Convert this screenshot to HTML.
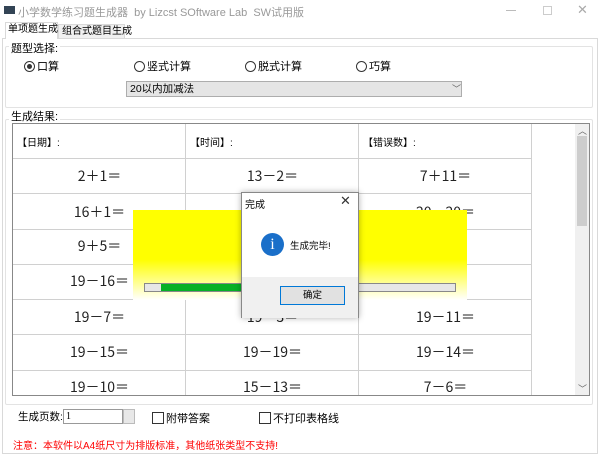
<!DOCTYPE html>
<html><head><meta charset="utf-8"><style>
*{box-sizing:border-box;margin:0;padding:0}
body{width:600px;height:456px;background:#fff;font-family:"Liberation Sans","Noto Sans CJK SC",sans-serif;font-size:11px;color:#000;position:relative;overflow:hidden}
.a{position:absolute;white-space:nowrap}
.c{position:absolute;width:173px;text-align:center;font-size:14px;color:#222;font-family:"Noto Sans CJK SC",sans-serif;line-height:20px}
.h{position:absolute;height:1px;background:#d0d0d0}
.v{position:absolute;width:1px;background:#d0d0d0}
.r{display:inline-block;width:11px;height:11px;border:1px solid #333;border-radius:50%;vertical-align:-2px;margin-right:2px;position:relative}
.k{display:inline-block;width:12px;height:12px;border:1px solid #333;vertical-align:-2px;margin-right:2px}
</style></head><body>
<!-- title bar -->
<div class="a" style="left:4px;top:6px;width:11px;height:8px;background:#345"></div>
<div class="a" style="left:18px;top:4px;color:#999;font-size:11px">小学数学练习题生成器&nbsp;&nbsp;by Lizcst SOftware Lab&nbsp;&nbsp;SW试用版</div>
<div class="a" style="left:506px;top:10px;width:10px;height:1px;background:#bbb"></div>
<div class="a" style="left:543px;top:6px;width:9px;height:9px;border:1px solid #ccc"></div>
<div class="a" style="left:577px;top:2px;color:#aaa;font-size:13px">✕</div>

<!-- tabs & panel -->
<div class="a" style="left:2px;top:38px;width:596px;height:416px;border:1px solid #d9d9d9;background:#fff"></div>
<div class="a" style="left:58px;top:24px;width:67px;height:15px;background:#f0f0f0;border:1px solid #d9d9d9;font-size:10px;padding-left:3px;line-height:13px">组合式题目生成</div>
<div class="a" style="left:5px;top:22px;width:53px;height:17px;background:#fff;border:1px solid #d9d9d9;border-bottom:none;font-size:10px;padding-left:2px;line-height:14px">单项题生成</div>

<!-- group 1 -->
<div class="a" style="left:5px;top:46px;width:588px;height:62px;border:1px solid #e3e3e3;border-radius:2px"></div>
<div class="a" style="left:9px;top:40px;background:#fff;padding:0 2px;font-size:11px">题型选择:</div>
<div class="a" style="left:24px;top:58px;font-size:11px"><span class="r"><span style="position:absolute;left:2px;top:2px;width:5px;height:5px;border-radius:50%;background:#333"></span></span>口算</div>
<div class="a" style="left:134px;top:58px;font-size:11px"><span class="r"></span>竖式计算</div>
<div class="a" style="left:245px;top:58px;font-size:11px"><span class="r"></span>脱式计算</div>
<div class="a" style="left:356px;top:58px;font-size:11px"><span class="r"></span>巧算</div>
<div class="a" style="left:126px;top:81px;width:336px;height:16px;background:#e5e5e5;border:1px solid #adadad;font-size:10.5px;padding-left:3px;line-height:14px">20以内加减法</div>
<div class="a" style="left:452px;top:82px;color:#666;font-size:9px">﹀</div>

<!-- group 2 -->
<div class="a" style="left:5px;top:119px;width:588px;height:286px;border:1px solid #e3e3e3;border-radius:2px"></div>
<div class="a" style="left:9px;top:108px;background:#fff;padding:0 2px;font-size:11px">生成结果:</div>

<!-- table -->
<div class="a" style="left:12px;top:123px;width:578px;height:273px;border:1px solid #888;background:#fff;overflow:hidden">
  <div class="v" style="left:172px;top:0;height:273px"></div>
  <div class="v" style="left:345px;top:0;height:273px"></div>
  <div class="v" style="left:518px;top:0;height:273px"></div>
  <div class="h" style="left:0;width:518px;top:34px"></div>
  <div class="h" style="left:0;width:518px;top:69px"></div>
  <div class="h" style="left:0;width:518px;top:105px"></div>
  <div class="h" style="left:0;width:518px;top:140px"></div>
  <div class="h" style="left:0;width:518px;top:175px"></div>
  <div class="h" style="left:0;width:518px;top:210px"></div>
  <div class="h" style="left:0;width:518px;top:246px"></div>
  <div class="a" style="left:4px;top:10px;font-size:10px">【日期】:</div>
  <div class="a" style="left:177px;top:10px;font-size:10px">【时间】:</div>
  <div class="a" style="left:350px;top:10px;font-size:10px">【错误数】:</div>
  <div class="c" style="left:0;top:42px">2＋1＝</div><div class="c" style="left:173px;top:42px">13－2＝</div><div class="c" style="left:346px;top:42px">7＋11＝</div>
  <div class="c" style="left:0;top:78px">16＋1＝</div><div class="c" style="left:346px;top:78px">20－20＝</div>
  <div class="c" style="left:0;top:112px">9＋5＝</div>
  <div class="c" style="left:0;top:147px">19－16＝</div>
  <div class="c" style="left:0;top:183px">19－7＝</div><div class="c" style="left:173px;top:183px">19－3＝</div><div class="c" style="left:346px;top:183px">19－11＝</div>
  <div class="c" style="left:0;top:218px">19－15＝</div><div class="c" style="left:173px;top:218px">19－19＝</div><div class="c" style="left:346px;top:218px">19－14＝</div>
  <div class="c" style="left:0;top:253px">19－10＝</div><div class="c" style="left:173px;top:253px">15－13＝</div><div class="c" style="left:346px;top:253px">7－6＝</div>
  <div class="a" style="left:562px;top:0;width:14px;height:271px;background:#f0f0f0"></div>
  <div class="a" style="left:564px;top:12px;width:10px;height:90px;background:#cdcdcd"></div>
  <div class="a" style="left:565px;top:0px;color:#666;font-size:9px">︿</div>
  <div class="a" style="left:565px;top:258px;color:#666;font-size:9px">﹀</div>
</div>

<!-- bottom -->
<div class="a" style="left:18px;top:409px;font-size:10.5px">生成页数:</div>
<div class="a" style="left:63px;top:409px;width:60px;height:15px;border:1px solid #999;font-size:10px;padding-left:2px;line-height:13px;font-family:'Liberation Serif',serif">1</div>
<div class="a" style="left:123px;top:409px;width:12px;height:15px;background:#e8e8e8;border:1px solid #bbb"></div>
<div class="a" style="left:152px;top:410px;font-size:11px"><span class="k"></span>附带答案</div>
<div class="a" style="left:259px;top:410px;font-size:11px"><span class="k"></span>不打印表格线</div>
<div class="a" style="left:13px;top:437px;font-size:10px;color:#f00">注意：本软件以A4纸尺寸为排版标准，其他纸张类型不支持!</div>

<!-- yellow progress panel -->
<div class="a" style="left:133px;top:210px;width:334px;height:90px;background:linear-gradient(#ff0 0%,#ff0 55%,#fff 100%)"></div>
<div class="a" style="left:144px;top:283px;width:312px;height:9px;background:#e6e6e6;border:1px solid #888"></div>
<div class="a" style="left:161px;top:284px;width:90px;height:7px;background:#06b025"></div>

<!-- dialog -->
<div class="a" style="left:241px;top:192px;width:118px;height:126px;background:#fff;border:1px solid #888;box-shadow:0 0 6px rgba(0,0,0,.3)">
  <div class="a" style="left:3px;top:3px;font-size:10px">完成</div>
  <div class="a" style="left:98px;top:0px;font-size:13px;color:#333">✕</div>
  <div class="a" style="left:19px;top:40px;width:23px;height:23px;border-radius:50%;background:#1a6fc9;color:#fff;text-align:center;font-size:16px;line-height:23px;font-family:'Liberation Serif',serif">i</div>
  <div class="a" style="left:48px;top:45px;font-size:9.5px">生成完毕!</div>
  <div class="a" style="left:0;top:84px;width:116px;height:41px;background:#f0f0f0"></div>
  <div class="a" style="left:38px;top:93px;width:65px;height:19px;background:#e1e1e1;border:1px solid #0078d7;text-align:center;font-size:9.5px;line-height:17px">确定</div>
</div>
</body></html>
